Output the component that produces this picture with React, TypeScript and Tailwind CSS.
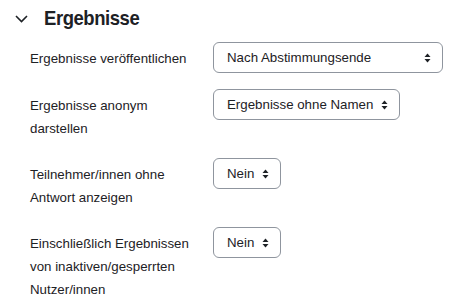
function SortIcon() {
  return (
    <svg width="7" height="10" viewBox="0 0 7 10" className="shrink-0" aria-hidden="true">
      <path d="M3.5 0.5 L6.5 4 L0.5 4 Z" fill="#1d2125" />
      <path d="M3.5 9.5 L6.5 6 L0.5 6 Z" fill="#1d2125" />
    </svg>
  );
}

function Select({ value, wide }: { value: string; wide?: boolean }) {
  return (
    <div
      className={
        "flex h-[31px] items-center justify-between gap-[8px] rounded-[6px] border border-[#8f959e] bg-white pl-[13px] pr-[11px] text-[13.3px] text-[#1d2125] " +
        (wide ? "w-[230px]" : "")
      }
    >
      <span className="whitespace-nowrap">{value}</span>
      <SortIcon />
    </div>
  );
}

const rows = [
  { label: "Ergebnisse veröffentlichen", value: "Nach Abstimmungsende", wide: true },
  { label: "Ergebnisse anonym darstellen", value: "Ergebnisse ohne Namen" },
  { label: "Teilnehmer/innen ohne Antwort anzeigen", value: "Nein" },
  { label: "Einschließlich Ergebnissen von inaktiven/gesperrten Nutzer/innen", value: "Nein" },
];

export default function App() {
  return (
    <div className="h-[306px] w-[475px] overflow-hidden bg-white font-['Liberation_Sans',Arial,sans-serif] text-[#1d2125]">
      {/* Section header */}
      <div className="flex items-center pl-[15px] pt-[5px]">
        <svg width="13" height="8" viewBox="0 0 13 8" className="mt-[2px]" aria-hidden="true">
          <path d="M1 1 L6.5 6.5 L12 1" fill="none" stroke="#1d2125" strokeWidth="1.6" />
        </svg>
        <h3 className="ml-[16px] origin-left scale-x-[0.88] text-[21px] font-bold leading-[26px] tracking-[-0.5px]">
          Ergebnisse
        </h3>
      </div>

      {/* Form rows */}
      <div className="mt-[11px] pl-[30px]">
        {rows.map((row) => (
          <div key={row.label} className="mb-[16px] flex items-start">
            <div className="w-[183px] shrink-0 pb-[2px] pr-[8px] pt-[5px] text-[13.3px] leading-[23px]">
              {row.label}
            </div>
            <Select value={row.value} wide={row.wide} />
          </div>
        ))}
      </div>
    </div>
  );
}
